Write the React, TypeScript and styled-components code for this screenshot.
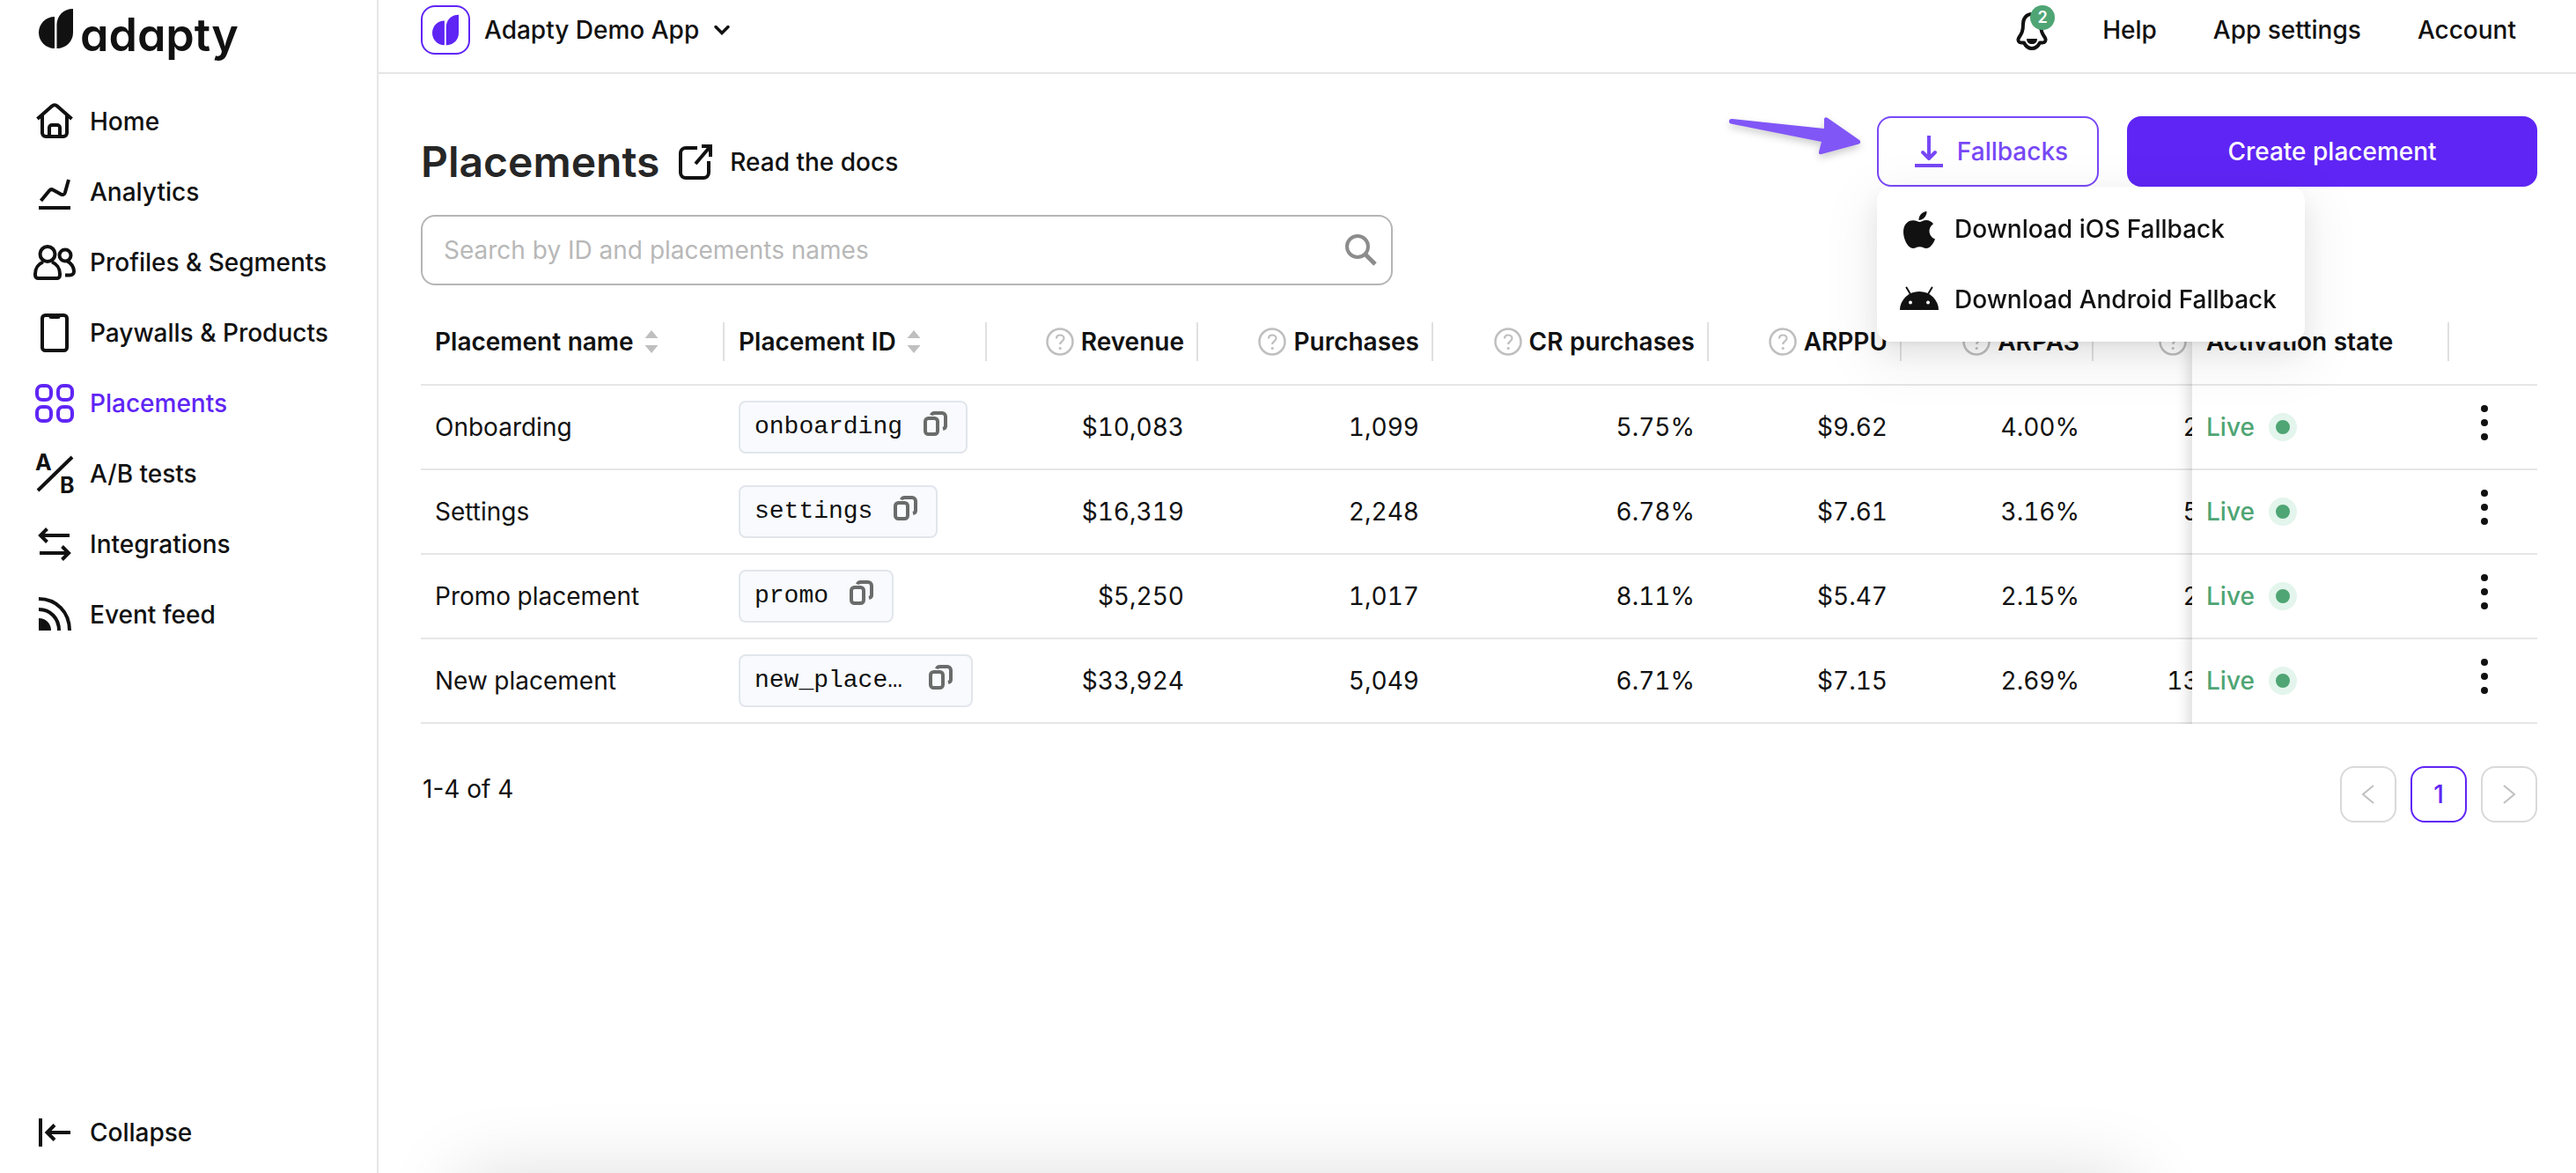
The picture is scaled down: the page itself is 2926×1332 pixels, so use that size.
import React from "react";
import styled, { createGlobalStyle, css } from "styled-components";

const ink = "#111111";
const accent = "#5f25f5";
const line = "#e6e6e6";
const green = "#4fa574";
const sans = `Inter, "Liberation Sans", sans-serif`;

const GlobalStyle = createGlobalStyle`
  *, *::before, *::after { box-sizing: border-box; }
  body { margin: 0; background: #fff; }
  button, input { font: inherit; color: inherit; }
  button { background: none; border: 0; padding: 0; cursor: pointer; }
  a { color: inherit; text-decoration: none; }
  svg { display: block; flex: none; overflow: visible; }
`;

const Shell = styled.div`
  display: flex;
  min-height: 100vh;
  overflow: hidden;
  font-family: ${sans};
  font-size: 28px;
  line-height: 44px;
  color: ${ink};
`;

const Sidebar = styled.aside`
  flex: none;
  width: 430px;
  border-right: 2px solid ${line};
  display: flex;
  flex-direction: column;
  padding: 0 0 6px;
`;

const Brand = styled.a`
  display: flex;
  align-items: flex-start;
  gap: 8px;
  height: 98px;
  padding: 10px 0 0 44px;
`;

const BrandName = styled.span`
  font-size: 52px;
  line-height: 60px;
  font-weight: 600;
  font-feature-settings: "cv11" 1;
`;

const Nav = styled.nav`
  flex: 1;
  display: flex;
  flex-direction: column;
`;

const navItem = css`
  display: flex;
  align-items: center;
  gap: 16px;
  height: 80px;
  padding-left: 38px;
  font-weight: 500;
  text-align: left;
`;

const NavItem = styled.a<{ $active?: boolean }>`
  ${navItem}
  color: ${(p) => (p.$active ? accent : ink)};
`;

const CollapseButton = styled.button`
  ${navItem}
`;

const Main = styled.main`
  position: relative;
  flex: 1;
  min-width: 0;
  display: flex;
  flex-direction: column;
`;

const BottomGlow = styled.div`
  position: absolute;
  left: 92px;
  right: 504px;
  top: calc(100% + 6px);
  height: 200px;
  box-shadow: 0 0 88px rgba(0, 0, 0, 0.15);
`;

const TopBar = styled.header`
  display: flex;
  align-items: center;
  justify-content: space-between;
  height: 84px;
  padding: 6px 68px 20px 48px;
  border-bottom: 2px solid ${line};
  font-weight: 500;
`;

const AppSwitcher = styled.button`
  display: flex;
  align-items: center;
  gap: 16px;
  font-weight: 500;
`;

const AppBadge = styled.span`
  width: 56px;
  height: 56px;
  display: grid;
  place-items: center;
  border: 2px solid ${accent};
  border-radius: 16px;
  color: ${accent};
`;

const TopLinks = styled.div`
  display: flex;
  align-items: center;
  gap: 64px;
`;

const BellButton = styled.button`
  position: relative;
  margin-right: -4px;
`;

const Count = styled.span`
  position: absolute;
  top: -4px;
  right: -6px;
  width: 28px;
  height: 28px;
  border-radius: 50%;
  background: ${green};
  color: #fff;
  font-size: 18px;
  line-height: 28px;
  font-weight: 600;
  text-align: center;
`;

const Content = styled.div`
  padding: 48px 44px 0 48px;
`;

const Heading = styled.div`
  display: flex;
  justify-content: space-between;
  align-items: flex-start;
`;

const TitleRow = styled.div`
  display: flex;
  align-items: center;
  gap: 16px;
  padding-top: 20px;
`;

const Title = styled.h1`
  margin: 0;
  font-size: 48px;
  line-height: 64px;
  font-weight: 600;
  color: #262626;
`;

const DocsLink = styled.a`
  display: flex;
  align-items: center;
  gap: 16px;
  font-weight: 500;
`;

const Actions = styled.div`
  display: flex;
  gap: 32px;
`;

const MenuAnchor = styled.div`
  position: relative;
`;

const PrimaryButton = styled.button`
  width: 466px;
  height: 80px;
  border-radius: 16px;
  background: ${accent};
  color: #fff;
  font-weight: 500;
`;

const OutlineButton = styled.button`
  display: flex;
  align-items: center;
  justify-content: center;
  gap: 8px;
  min-width: 252px;
  height: 80px;
  padding: 0 32px;
  border: 2px solid #7848f6;
  border-radius: 16px;
  color: #7848f6;
  font-weight: 500;
`;

const Menu = styled.div`
  position: absolute;
  z-index: 5;
  top: 100%;
  left: 0;
  padding: 8px 0;
  border-radius: 16px;
  background: #fff;
  box-shadow: 0 6px 12px -8px rgba(0, 0, 0, 0.12), 0 12px 32px rgba(0, 0, 0, 0.08),
    0 18px 56px 16px rgba(0, 0, 0, 0.05);
`;

const MenuItem = styled.button`
  display: flex;
  align-items: center;
  gap: 16px;
  width: 100%;
  height: 80px;
  padding: 0 32px 0 24px;
  white-space: nowrap;
  font-weight: 500;
`;

const Pointer = styled.svg`
  position: absolute;
  top: -8px;
  left: -176px;
  z-index: 6;
  filter: drop-shadow(0 4px 4px rgba(0, 0, 0, 0.2));
`;

const SearchBox = styled.label`
  display: flex;
  align-items: center;
  width: 1104px;
  max-width: 100%;
  height: 80px;
  margin: 28px 0 16px;
  padding: 0 14px 0 24px;
  border: 2px solid #b5b5b5;
  border-radius: 16px;
  color: #8c8c8c;
`;

const SearchInput = styled.input`
  flex: 1;
  min-width: 0;
  border: 0;
  outline: 0;
  padding: 0;
  background: none;
  color: ${ink};
  &::placeholder { color: #b8b8b8; opacity: 1; }
`;

const TableScroll = styled.div`
  overflow-x: auto;
  scrollbar-width: none;
`;

const Table = styled.table`
  width: 2499px;
  min-width: 100%;
  table-layout: fixed;
  border-collapse: separate;
  border-spacing: 0;
  font-variant-numeric: tabular-nums;
`;

const pinned = css<{ $pin?: "first" | "last" }>`
  ${(p) =>
    p.$pin &&
    css`
      position: sticky;
      right: ${p.$pin === "first" ? "100px" : "0"};
      background: #fff;
    `}
  ${(p) =>
    p.$pin === "first" &&
    css`
      &::after {
        content: "";
        position: absolute;
        top: 0;
        bottom: -2px;
        left: -60px;
        width: 60px;
        box-shadow: inset -20px 0 16px -16px rgba(0, 0, 0, 0.15);
        pointer-events: none;
      }
    `}
`;

const HeadCell = styled.th<{ $pin?: "first" | "last" }>`
  height: 98px;
  padding: 0;
  border-bottom: 2px solid ${line};
  font-weight: 600;
  ${pinned}
`;

const HeadInner = styled.div<{ $end?: boolean; $rule?: boolean }>`
  display: flex;
  align-items: center;
  justify-content: ${(p) => (p.$end ? "flex-end" : "flex-start")};
  gap: ${(p) => (p.$end ? "8px" : "12px")};
  height: 44px;
  padding: 0 ${(p) => (p.$rule ? "14px" : "16px")} 0 16px;
  border-right: ${(p) => (p.$rule ? "2px solid #e0e0e0" : "0")};
  white-space: nowrap;
`;

const Cell = styled.td<{ $end?: boolean; $pin?: "first" | "last" }>`
  height: 96px;
  padding: 0 16px;
  border-bottom: 2px solid ${line};
  text-align: ${(p) => (p.$end ? "right" : "left")};
  ${pinned}
`;

const IdTag = styled.div`
  display: inline-flex;
  align-items: center;
  height: 60px;
  padding: 0 14px 0 16px;
  gap: 18px;
  border: 2px solid #e2e6ec;
  border-radius: 8px;
  background: #f8fafd;
  vertical-align: middle;
`;

const IdText = styled.code`
  max-width: 174px;
  overflow: hidden;
  text-overflow: ellipsis;
  white-space: nowrap;
  font-family: "Liberation Mono", monospace;
`;

const Status = styled.span`
  display: flex;
  align-items: center;
  gap: 16px;
  color: ${green};
  font-weight: 500;
`;

const StatusDot = styled.i`
  width: 32px;
  height: 32px;
  border: 8px solid #e3f5ec;
  border-radius: 50%;
  background: ${green};
`;

const MoreButton = styled.button`
  display: block;
  padding-bottom: 10px;
`;

const Footer = styled.div`
  display: flex;
  justify-content: space-between;
  align-items: flex-start;
  padding: 48px 0 0 2px;
`;

const Range = styled.span`
  padding-top: 4px;
`;

const Pager = styled.div`
  display: flex;
  gap: 16px;
`;

const PageButton = styled.button<{ $active?: boolean }>`
  display: grid;
  place-items: center;
  width: 64px;
  height: 64px;
  border: 2px solid ${(p) => (p.$active ? accent : "#d9d9d9")};
  border-radius: 16px;
  color: ${(p) => (p.$active ? accent : "#bfbfbf")};
  font-weight: 500;
`;

const Leaf = ({ width, height }: { width: number; height: number }) => (
  <svg width={width} height={height} viewBox="0 0 39 45" fill="currentColor" aria-hidden="true">
    <path d="M18 9v36C8 45 0 37 0 27S8 9 18 9z" />
    <path d="M39 0v27c0 10-8 18-18.500 18V18C20.500 8 28 0 39 0z" />
  </svg>
);

const Icon = ({ children, size = 48, width = 4 }: { children: React.ReactNode; size?: number; width?: number }) => (
  <svg
    width={size}
    height={size}
    viewBox={`0 0 ${size} ${size}`}
    fill="none"
    stroke="currentColor"
    strokeWidth={width}
    aria-hidden="true"
  >
    {children}
  </svg>
);

const icons: Record<string, React.ReactNode> = {
  home: (
    <>
      <path d="M4.500 21 21 6.500a4.500 4.500 0 0 1 6 0L43.500 21" />
      <path d="M10 17v20a4 4 0 0 0 4 4h20a4 4 0 0 0 4-4V17" />
      <path d="M18 41V31a3 3 0 0 1 3-3h6a3 3 0 0 1 3 3v10" />
    </>
  ),
  analytics: (
    <>
      <path d="M6 42h36" />
      <path d="M8.500 34 18 22.500a3.500 3.500 0 0 1 4.500-.8l9 5a3 3 0 0 0 4.300-1.700L40 10" />
    </>
  ),
  people: (
    <>
      <circle cx="16" cy="14.500" r="8.500" />
      <path d="M11 23.500C6 25.500 2 30.500 2 37v1.500c0 2 1.500 3.500 3.500 3.500h21c2 0 3.500-1.500 3.500-3.500V37c0-6.500-4-11.500-9-13.500" />
      <circle cx="36" cy="16" r="6.500" />
      <path d="M38 22.500c5 2 8 7 8 11.500 0 3-2 4.500-4.500 4.500H36" />
    </>
  ),
  phone: (
    <>
      <rect x="10" y="4" width="28" height="40" rx="3.500" />
      <path d="M20 5.500h8" strokeWidth="5" strokeLinecap="round" />
    </>
  ),
  grid: (
    <>
      <rect x="4" y="4" width="16" height="16" rx="6" />
      <rect x="28" y="4" width="16" height="16" rx="6" />
      <rect x="4" y="28" width="16" height="16" rx="6" />
      <rect x="28" y="28" width="16" height="16" rx="6" />
    </>
  ),
  ab: (
    <>
      <path d="M5 43 44 5" />
      <text x="2" y="20" fontSize="25" fontWeight="700" fill="currentColor" stroke="none">A</text>
      <text x="30" y="46" fontSize="25" fontWeight="700" fill="currentColor" stroke="none">B</text>
    </>
  ),
  swap: (
    <>
      <path d="M41 14H9M15.500 6.500 8 14l7.500 7.500" />
      <path d="M7 34h32M32.500 26.500 40 34l-7.500 7.500" />
    </>
  ),
  feed: (
    <>
      <path d="M6 6c20 0 35 15 35 36M6 18c13 0 23 10 23 24" />
      <path d="M6 28c8 0 14 6 14 14H6z" fill="currentColor" stroke="none" />
    </>
  ),
  collapse: <path d="M8 8v32M42 24H17M24 15.500 15.500 24l8.500 8.500" />,
};

const HelpMark = () => (
  <svg width="32" height="32" viewBox="0 0 32 32" fill="none" stroke="#bfbfbf" aria-hidden="true">
    <circle cx="16" cy="16" r="14.500" strokeWidth="2.500" />
    <path d="M12 12.500c0-2.500 1.800-4 4.200-4s4.300 1.500 4.300 3.800c0 3.200-4.300 3-4.300 6.700" strokeWidth="2.200" />
    <circle cx="16.200" cy="23.500" r="1.600" fill="#bfbfbf" stroke="none" />
  </svg>
);

const SortMark = () => (
  <svg width="16" height="28" viewBox="0 0 16 28" fill="#bfbfbf" aria-hidden="true">
    <path d="M8 1l7.500 9H.5zM8 27l7.500-9H.5z" />
  </svg>
);

const nav = [
  { icon: "home", label: "Home" },
  { icon: "analytics", label: "Analytics" },
  { icon: "people", label: "Profiles & Segments" },
  { icon: "phone", label: "Paywalls & Products" },
  { icon: "grid", label: "Placements", active: true },
  { icon: "ab", label: "A/B tests" },
  { icon: "swap", label: "Integrations" },
  { icon: "feed", label: "Event feed" },
];

const columnWidths = [345, 298, 240, 267, 313, 219, 218, 207, 292, 100];
const metrics = ["Revenue", "Purchases", "CR purchases", "ARPPU", "ARPAS", "ARPU"];
const rows = [
  { name: "Onboarding", id: "onboarding", values: ["$10,083", "1,099", "5.75%", "$9.62", "4.00%", "2.15%"] },
  { name: "Settings", id: "settings", values: ["$16,319", "2,248", "6.78%", "$7.61", "3.16%", "5.47%"] },
  { name: "Promo placement", id: "promo", values: ["$5,250", "1,017", "8.11%", "$5.47", "2.15%", "2.69%"] },
  { name: "New placement", id: "new_placement", values: ["$33,924", "5,049", "6.71%", "$7.15", "2.69%", "13.16%"] },
];

export default function App() {
  return (
    <Shell>
      <GlobalStyle />
      <Sidebar>
        <Brand href="#">
          <Leaf width={39} height={45} />
          <BrandName>adapty</BrandName>
        </Brand>
        <Nav>
          {nav.map((item) => (
            <NavItem key={item.label} href="#" $active={item.active}>
              <Icon>{icons[item.icon]}</Icon>
              {item.label}
            </NavItem>
          ))}
        </Nav>
        <CollapseButton>
          <Icon>{icons.collapse}</Icon>
          Collapse
        </CollapseButton>
      </Sidebar>

      <Main>
        <TopBar>
          <AppSwitcher>
            <AppBadge>
              <Leaf width={30} height={36} />
            </AppBadge>
            Adapty Demo App
            <svg width="20" height="14" viewBox="0 0 20 14" fill="none" stroke="currentColor" strokeWidth="3.500" aria-hidden="true">
              <path d="M3 3.500l7 7 7-7" strokeLinecap="round" />
            </svg>
          </AppSwitcher>
          <TopLinks>
            <BellButton aria-label="Notifications">
              <svg width="40" height="48" viewBox="0 0 40 48" fill="none" stroke="currentColor" strokeWidth="4" strokeLinejoin="round" aria-hidden="true">
                <path d="M20 6c-6 0-10 4.500-10 11 0 9-2 11.500-5 16-1.500 3 0 5.500 3 5.500h3c2 4 5 6.500 9 6.500s7-2.500 9-6.500h3c3 0 4.500-2.500 3-5.500-3-4.500-5-7-5-16 0-6.500-4-11-10-11z" />
                <path d="M14 34h12c0 4-2.500 6-6 6s-6-2-6-6z" fill="currentColor" stroke="none" />
              </svg>
              <Count>2</Count>
            </BellButton>
            <a href="#">Help</a>
            <a href="#">App settings</a>
            <a href="#">Account</a>
          </TopLinks>
        </TopBar>

        <Content>
          <Heading>
            <TitleRow>
              <Title>Placements</Title>
              <DocsLink href="#">
                <Icon>
                  <path d="M27 8H14a6 6 0 0 0-6 6v22a6 6 0 0 0 6 6h20a6 6 0 0 0 6-6V23M25 26 42 6M32 6h10v12" />
                </Icon>
                Read the docs
              </DocsLink>
            </TitleRow>
            <Actions>
              <MenuAnchor>
                <OutlineButton aria-haspopup="menu" aria-expanded="true">
                  <Icon>
                    <path d="M24 6v24M8 40h32" />
                    <path d="M17 25l7 7 7-7" strokeLinecap="round" strokeLinejoin="round" />
                  </Icon>
                  Fallbacks
                </OutlineButton>
                <Menu role="menu">
                  <MenuItem role="menuitem">
                    <svg width="48" height="48" viewBox="0 0 48 48" fill="currentColor" aria-hidden="true">
                      <path d="M32.500 4c.4 5-4 10-9 10-.5-5 4-9.500 9-10z" />
                      <path d="M24.500 16c2 0 4-2 7.500-2 3.300 0 6.200 1.700 8 4.300-7 4.700-5.500 14.500 2 17.200C40 41 36 46 32 46c-3 0-4-1.700-7.500-1.700S20 46 17 46C11 46 6 35.500 6 27.500 6 19 11 14.300 17 14.300c3.300 0 5.500 1.700 7.500 1.700z" />
                    </svg>
                    Download iOS Fallback
                  </MenuItem>
                  <MenuItem role="menuitem">
                    <svg width="48" height="48" viewBox="0 0 48 48" fill="currentColor" aria-hidden="true">
                      <path d="M2 36a22 21 0 0 1 44 0z" />
                      <path d="M14 18 9.500 10.500M34 18l4.500-7.500" stroke="currentColor" strokeWidth="2" strokeLinecap="round" />
                      <circle cx="14" cy="27.500" r="2" fill="#fff" />
                      <circle cx="34" cy="27.500" r="2" fill="#fff" />
                    </svg>
                    Download Android Fallback
                  </MenuItem>
                </Menu>
                <Pointer width="168" height="64" viewBox="0 0 168 64" fill="#8156f7" aria-hidden="true">
                  <path d="M8 13.500c.3-2 1.500-2.700 3.500-2.500L116 22V11.500c.3-2.500 2-3 4-1.500l36 25c1.700 1.500 1.500 3.500-.5 4.500L113 51c-2.300.7-3.500-.5-3-2.500l3-11.500L10 16.500c-1.500-.5-2.200-1.500-2-3z" />
                </Pointer>
              </MenuAnchor>
              <PrimaryButton>Create placement</PrimaryButton>
            </Actions>
          </Heading>

          <SearchBox>
            <SearchInput type="text" placeholder="Search by ID and placements names" aria-label="Search placements" />
            <Icon size={42}>
              <circle cx="18" cy="17" r="12" />
              <path d="M27 26l11 11" strokeWidth="5" />
            </Icon>
          </SearchBox>

          <TableScroll>
            <Table>
              <colgroup>
                {columnWidths.map((w, i) => (
                  <col key={i} width={w} />
                ))}
              </colgroup>
              <thead>
                <tr>
                  <HeadCell>
                    <HeadInner $rule>
                      Placement name
                      <SortMark />
                    </HeadInner>
                  </HeadCell>
                  <HeadCell>
                    <HeadInner $rule>
                      Placement ID
                      <SortMark />
                    </HeadInner>
                  </HeadCell>
                  {metrics.map((m) => (
                    <HeadCell key={m}>
                      <HeadInner $end $rule>
                        <HelpMark />
                        {m}
                      </HeadInner>
                    </HeadCell>
                  ))}
                  <HeadCell $pin="first">
                    <HeadInner $rule>Activation state</HeadInner>
                  </HeadCell>
                  <HeadCell $pin="last" aria-label="Actions" />
                </tr>
              </thead>
              <tbody>
                {rows.map((r) => (
                  <tr key={r.id}>
                    <Cell>{r.name}</Cell>
                    <Cell>
                      <IdTag>
                        <IdText>{r.id}</IdText>
                        <button aria-label="Copy ID">
                          <svg width="40" height="40" viewBox="0 0 40 40" fill="none" stroke="#6b6b6b" strokeWidth="4" aria-hidden="true">
                            <rect x="8" y="10" width="14" height="18" rx="3.500" />
                            <path d="M15 6.500C15.500 4.800 16.500 4 18.500 4H27a4 4 0 0 1 4 4v11c0 1.500-1 2.500-3 3" />
                          </svg>
                        </button>
                      </IdTag>
                    </Cell>
                    {r.values.map((v, i) => (
                      <Cell key={i} $end>
                        {v}
                      </Cell>
                    ))}
                    <Cell $pin="first">
                      <Status>
                        Live
                        <StatusDot />
                      </Status>
                    </Cell>
                    <Cell $pin="last">
                      <MoreButton aria-label="More actions">
                        <svg width="48" height="48" viewBox="0 0 48 48" fill="currentColor" aria-hidden="true">
                          <circle cx="24" cy="8" r="4" />
                          <circle cx="24" cy="24" r="4" />
                          <circle cx="24" cy="40" r="4" />
                        </svg>
                      </MoreButton>
                    </Cell>
                  </tr>
                ))}
              </tbody>
            </Table>
          </TableScroll>

          <Footer>
            <Range>1-4 of 4</Range>
            <Pager>
              <PageButton aria-label="Previous page">
                <Icon size={24} width={2}>
                  <path d="M18 2 6 12l12 10" />
                </Icon>
              </PageButton>
              <PageButton $active>1</PageButton>
              <PageButton aria-label="Next page">
                <Icon size={24} width={2}>
                  <path d="M6 2l12 10L6 22" />
                </Icon>
              </PageButton>
            </Pager>
          </Footer>
        </Content>
        <BottomGlow />
      </Main>
    </Shell>
  );
}
